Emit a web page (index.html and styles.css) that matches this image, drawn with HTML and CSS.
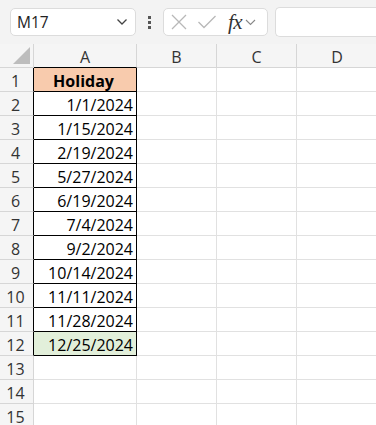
FILE: index.html
```
<!DOCTYPE html>
<html lang="en">
<head>
    <meta charset="UTF-8">
    <title>Holidays</title>
    <link rel="stylesheet" href="styles.css">
</head>
<body>
    <div class="toolbar">
        <div class="name-box">
            <span>M17</span>
            <svg class="chev" width="12" height="8" viewBox="0 0 12 8"><path d="M1.5 1.5 L6 6 L10.5 1.5" fill="none" stroke="#444" stroke-width="1.3"/></svg>
        </div>
        <div class="dots"><i></i><i></i><i></i></div>
        <div class="fx-box">
            <svg width="18" height="18" viewBox="0 0 18 18"><path d="M2 2 L16 16 M16 2 L2 16" stroke="#b8b8b8" stroke-width="1.3"/></svg>
            <svg width="20" height="16" viewBox="0 0 20 16"><path d="M1.5 8 L7 13.5 L18.5 2" fill="none" stroke="#b8b8b8" stroke-width="1.3"/></svg>
            <span class="fx">fx</span>
            <svg width="11" height="7" viewBox="0 0 11 7"><path d="M1 1 L5.5 5.5 L10 1" fill="none" stroke="#888" stroke-width="1.1"/></svg>
        </div>
        <div class="formula"></div>
    </div>

    <div class="sheet">
        <div class="hdr corner"><span class="tri"></span></div>
        <div class="hdr col col-a">A</div>
        <div class="hdr col">B</div>
        <div class="hdr col">C</div>
        <div class="hdr col last">D</div>

        <div class="hdr row boxed">1</div><div class="cell a head">Holiday</div><div class="cell"></div><div class="cell"></div><div class="cell last"></div>
        <div class="hdr row boxed">2</div><div class="cell a">1/1/2024</div><div class="cell"></div><div class="cell"></div><div class="cell last"></div>
        <div class="hdr row boxed">3</div><div class="cell a">1/15/2024</div><div class="cell"></div><div class="cell"></div><div class="cell last"></div>
        <div class="hdr row boxed">4</div><div class="cell a">2/19/2024</div><div class="cell"></div><div class="cell"></div><div class="cell last"></div>
        <div class="hdr row boxed">5</div><div class="cell a">5/27/2024</div><div class="cell"></div><div class="cell"></div><div class="cell last"></div>
        <div class="hdr row boxed">6</div><div class="cell a">6/19/2024</div><div class="cell"></div><div class="cell"></div><div class="cell last"></div>
        <div class="hdr row boxed">7</div><div class="cell a">7/4/2024</div><div class="cell"></div><div class="cell"></div><div class="cell last"></div>
        <div class="hdr row boxed">8</div><div class="cell a">9/2/2024</div><div class="cell"></div><div class="cell"></div><div class="cell last"></div>
        <div class="hdr row boxed">9</div><div class="cell a">10/14/2024</div><div class="cell"></div><div class="cell"></div><div class="cell last"></div>
        <div class="hdr row boxed">10</div><div class="cell a">11/11/2024</div><div class="cell"></div><div class="cell"></div><div class="cell last"></div>
        <div class="hdr row boxed">11</div><div class="cell a">11/28/2024</div><div class="cell"></div><div class="cell"></div><div class="cell last"></div>
        <div class="hdr row boxed">12</div><div class="cell a green">12/25/2024</div><div class="cell"></div><div class="cell"></div><div class="cell last"></div>
        <div class="hdr row">13</div><div class="cell"></div><div class="cell"></div><div class="cell"></div><div class="cell last"></div>
        <div class="hdr row">14</div><div class="cell"></div><div class="cell"></div><div class="cell"></div><div class="cell last"></div>
        <div class="hdr row">15</div><div class="cell"></div><div class="cell"></div><div class="cell"></div><div class="cell last"></div>
    </div>
</body>
</html>
```

FILE: styles.css
```
body {
    margin: 0;
    font-family: "Open Sans", "Noto Sans", sans-serif;
    background: #ffffff;
    overflow: hidden;
}
.toolbar {
    height: 44px;
    background: #f3f3f3;
    display: flex;
    align-items: center;
    padding-left: 10px;
    box-sizing: border-box;
}
.name-box {
    width: 126px;
    height: 28px;
    box-sizing: border-box;
    background: #fff;
    border: 1px solid #dcdcdc;
    border-radius: 5px;
    display: flex;
    align-items: center;
    justify-content: space-between;
    padding: 0 7px 0 6px;
    font-size: 15.5px;
    color: #222;
}
.dots {
    width: 27px;
    display: flex;
    flex-direction: column;
    align-items: center;
    gap: 2px;
}
.dots i {
    display: block;
    width: 3px;
    height: 3px;
    background: #555;
}
.fx-box {
    width: 105px;
    height: 28px;
    box-sizing: border-box;
    background: #fff;
    border: 1px solid #dcdcdc;
    border-radius: 5px;
    display: flex;
    align-items: center;
    padding-left: 6px;
    gap: 9px;
}
.fx {
    font-family: "Liberation Serif", "DejaVu Serif", serif;
    font-style: italic;
    font-size: 21px;
    color: #333;
    margin-left: 2px;
    margin-right: -6px;
    letter-spacing: -0.5px;
}
.formula {
    flex: 1;
    height: 28px;
    margin-left: 7px;
    background: #fff;
    border: 1px solid #dcdcdc;
    border-right: none;
    border-radius: 5px 0 0 5px;
}
.sheet {
    display: grid;
    grid-template-columns: 34px 103px 80px 80px 80px;
    grid-template-rows: 24px;
    grid-auto-rows: 24px;
}
.hdr {
    background: #f5f5f5;
    color: #333;
    font-size: 16px;
    box-sizing: border-box;
    border-right: 1px solid #d6d6d6;
    border-bottom: 1px solid #d6d6d6;
    display: flex;
    align-items: center;
    justify-content: center;
    padding-top: 2px;
}
.corner {
    position: relative;
}
.tri {
    position: absolute;
    right: 3px;
    bottom: 3px;
    width: 0;
    height: 0;
    border-left: 17px solid transparent;
    border-bottom: 17px solid #bdbdbd;
}
.col-a {
    border-bottom-color: #000;
}
.row {
    justify-content: center;
    padding-right: 2px;
}
.boxed {
    border-right-color: #000;
}
.cell {
    box-sizing: border-box;
    border-right: 1px solid #e1e1e1;
    border-bottom: 1px solid #e1e1e1;
    font-size: 16px;
    color: #000;
    display: flex;
    align-items: center;
    justify-content: flex-end;
    padding: 3px 3px 0 0;
}
.cell.a:not(:empty) {
    border-right-color: #000;
    border-bottom-color: #000;
}
.head {
    background: #f8cbad;
    font-weight: bold;
    justify-content: center;
}
.green {
    background: #e2efda;
}
.last {
    border-right: none;
}
```
